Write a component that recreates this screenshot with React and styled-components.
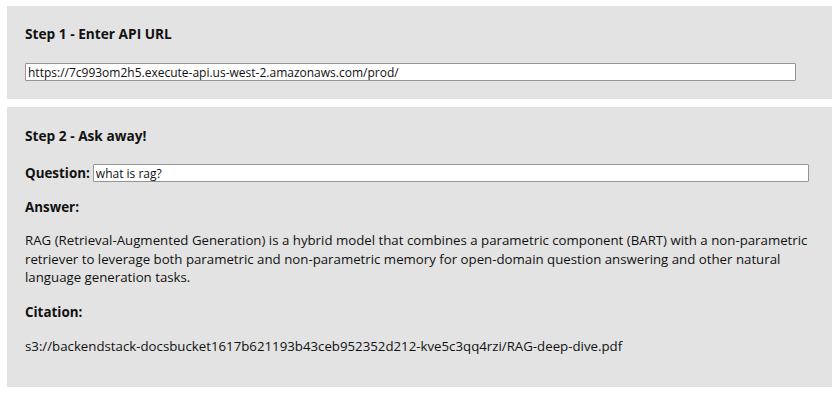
import React from "react";
import styled, { createGlobalStyle } from "styled-components";

const Global = createGlobalStyle`
  html, body { margin: 0; padding: 0; background: #ffffff; }
  body {
    font-family: "Open Sans", "Noto Sans", sans-serif;
    color: #111111;
  }
`;

const Page = styled.div`
  display: flex;
  flex-direction: column;
  gap: 8px;
  padding: 6px 4px 0 7px;
  width: 836px;
  box-sizing: border-box;
`;

const Panel = styled.section`
  background: #e3e3e3;
  box-sizing: border-box;
  padding: ${(p) => p.$pad};
  height: ${(p) => p.$h}px;
  display: flex;
  flex-direction: column;
`;

const Heading = styled.h2`
  margin: 0;
  font-size: 13.7px;
  font-weight: 700;
  line-height: 18px;
`;

const Label = styled.div`
  font-size: 13.4px;
  font-weight: 700;
  line-height: 18px;
  margin-top: ${(p) => p.$mt || 0}px;
`;

const Field = styled.input`
  box-sizing: border-box;
  height: 18px;
  border: 1px solid #959595;
  border-radius: 1px;
  background: #ffffff;
  padding: 0 2px;
  font-family: "Open Sans", "Noto Sans", sans-serif;
  font-size: 12px;
  color: #111111;
  outline: none;
  width: ${(p) => p.$w}px;
  margin-top: ${(p) => p.$mt || 0}px;
`;

const Row = styled.div`
  display: flex;
  align-items: center;
  gap: 3px;
  margin-top: ${(p) => p.$mt || 0}px;
`;

const Text = styled.p`
  margin: ${(p) => p.$mt || 0}px 0 0 0;
  font-size: 13.25px;
  line-height: 18.5px;
`;

export default function App() {
  return (
    <>
      <Global />
      <Page>
        <Panel $pad="19px 18px 0 18px" $h={93}>
          <Heading>Step 1 - Enter API URL</Heading>
          <Field
            $mt={20}
            $w={771}
            defaultValue="https://7c993om2h5.execute-api.us-west-2.amazonaws.com/prod/"
          />
        </Panel>
        <Panel $pad="20px 18px 0 18px" $h={280}>
          <Heading>Step 2 - Ask away!</Heading>
          <Row $mt={19}>
            <Label>Question:</Label>
            <Field $w={716} defaultValue="what is rag?" />
          </Row>
          <Label $mt={16}>Answer:</Label>
          <Text $mt={15}>
            RAG (Retrieval-Augmented Generation) is a hybrid model that combines a parametric
            component (BART) with a non-parametric retriever to leverage both parametric and
            non-parametric memory for open-domain question answering and other natural language
            generation tasks.
          </Text>
          <Label $mt={16}>Citation:</Label>
          <Text $mt={16}>
            s3://backendstack-docsbucket1617b621193b43ceb952352d212-kve5c3qq4rzi/RAG-deep-dive.pdf
          </Text>
        </Panel>
      </Page>
    </>
  );
}
